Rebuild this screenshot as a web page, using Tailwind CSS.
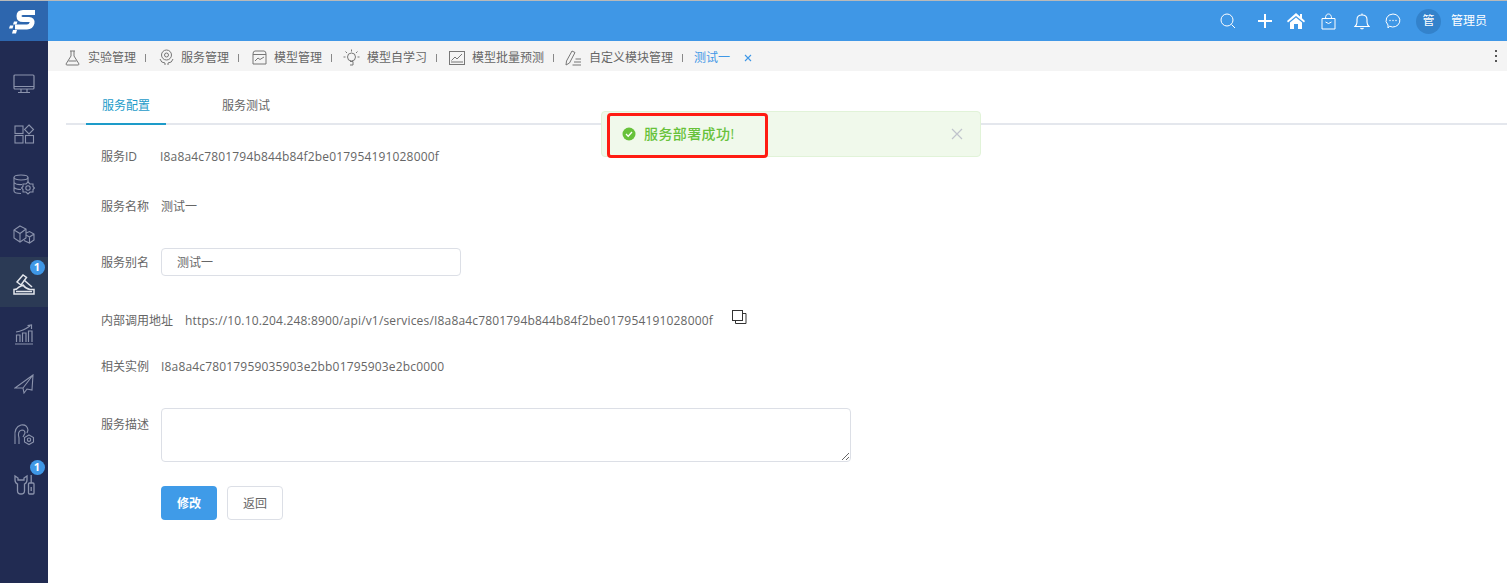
<!DOCTYPE html>
<html lang="zh-CN">
<head>
<meta charset="UTF-8" />
<title>服务配置</title>
<script src="https://cdn.jsdelivr.net/npm/@tailwindcss/browser@4"></script>
</head>
<body class="h-[583px] w-[1507px] overflow-hidden bg-white text-xs text-[#666] font-['Open_Sans','Noto_Sans_CJK_SC',sans-serif]">
<div class="h-px bg-[#b9b9b9]"></div>
<header class="flex h-10 items-center bg-[#3f97e6] text-white">
  <div class="h-10 w-12 bg-[#2d66ae]">
    <svg width="48" height="40" viewBox="0 0 48 40">
      <path d="M35 11.500 H23 Q19 11.500 19 15 Q19 18.500 23 18.500 H29 Q32.500 18.500 32 22 Q31 26 27 26 H15" fill="none" stroke="white" stroke-width="5"/>
      <path d="M14 20.500 h3.500 l-1 3 h-3.500z M10 24.500 h3.500 l-1 3 h-3.500z M13 29 h4 l-1 3.500 h-4z" fill="white"/>
    </svg>
  </div>
  <div class="ml-auto flex items-center">
    <svg class="mr-[21px]" width="16" height="16" viewBox="0 0 16 16" fill="none" stroke="white" stroke-width="1"><circle cx="7" cy="7" r="6"/><path d="M11.500 11.500 L15 15"/></svg>
    <svg class="mr-[13px]" width="16" height="16" viewBox="0 0 16 16" fill="none" stroke="white" stroke-width="2"><path d="M8 1 V15 M1 8 H15"/></svg>
    <svg class="mr-[15px]" width="20" height="18" viewBox="0 0 20 18" fill="white"><path d="M10 1 L1 9 L2 10.500 L10 4 L18 10.500 L19 9 L16 6.300 V2 H14 V4.600Z"/><path d="M4 10.500 L10 5.500 L16 10.500 V17 H12 V12 H8 V17 H4Z"/></svg>
    <svg class="mr-[18px]" width="15" height="17" viewBox="0 0 15 17" fill="none" stroke="white" stroke-width="1"><path d="M1 5.500 H14 V16 H1Z"/><path d="M4.500 5.500 Q4.500 1 7.500 1 Q10.500 1 10.500 5.500"/><path d="M4.500 9 Q7.500 12 10.500 9"/></svg>
    <svg class="mr-[15px]" width="16" height="17" viewBox="0 0 16 17" fill="none" stroke="white" stroke-width="1.100"><path d="M1 13.500 Q3 12 3 9 V6.500 Q3 2 8 2 Q13 2 13 6.500 V9 Q13 12 15 13.500Z"/><path d="M6.500 15 Q8 16.500 9.500 15"/><path d="M8 0.500 V2"/></svg>
    <svg class="mr-[15px]" width="16" height="16" viewBox="0 0 16 16" fill="none" stroke="white" stroke-width="1"><path d="M8 1 A7 6.500 0 1 1 4.500 13.200 L3 15 V12 A7 6.500 0 0 1 8 1Z"/><circle cx="5" cy="7.500" r=".7" fill="white" stroke="none"/><circle cx="8" cy="7.500" r=".7" fill="white" stroke="none"/><circle cx="11" cy="7.500" r=".7" fill="white" stroke="none"/></svg>
    <div class="mr-[10px] flex h-[25px] w-[25px] items-center justify-center rounded-full bg-[#3382cb] text-xs">管</div>
    <span class="mr-5 text-xs">管理员</span>
  </div>
</header>
<div class="flex">
  <aside class="relative h-[542px] w-12 shrink-0 bg-[#212b52] pt-4 text-[#8b93ac]">
    <div class="flex h-[50px] items-center justify-center pt-1">
      <svg width="22" height="20" viewBox="0 0 22 20" fill="none" stroke="currentColor" stroke-width="1.200"><rect x="1" y="1" width="20" height="14" rx="1"/><path d="M1 12.500 H21 M8 15 V18 M14 15 V18 M5 18.500 H17"/></svg>
    </div>
    <div class="flex h-[50px] items-center justify-center pt-1">
      <svg width="21" height="20" viewBox="0 0 21 20" fill="none" stroke="currentColor" stroke-width="1.100"><rect x="1" y="2" width="8" height="7.500"/><rect x="1" y="11.500" width="8" height="7.500"/><rect x="11.500" y="11.500" width="8" height="7.500"/><path d="M15 1 L19.500 5.500 L15 10 L10.500 5.500Z"/></svg>
    </div>
    <div class="flex h-[50px] items-center justify-center pt-1">
      <svg width="22" height="21" viewBox="0 0 22 21" fill="none" stroke="currentColor" stroke-width="1.100"><ellipse cx="8" cy="3.500" rx="7" ry="2.500"/><path d="M1 3.500 V17 Q1 19.500 8 19.500 M15 3.500 V8 M1 8.500 Q3 11 9 10.500 M1 13.500 Q3 15.500 8 15.500"/><circle cx="15" cy="14" r="2.200"/><path d="M15 8 L17 10 H20 V12.500 L21.500 14 L20 15.500 V18 H17 L15 20 L13 18 H10 V15.500 L8.500 14 L10 12.500 V10 H13Z"/></svg>
    </div>
    <div class="flex h-[50px] items-center justify-center pt-1">
      <svg width="22" height="19" viewBox="0 0 22 19" fill="none" stroke="currentColor" stroke-width="1.100"><path d="M7 1 L13 4 V13 L7 17 L1 13 V5Z"/><path d="M1 5 L7 8.500 L13 4 M7 8.500 V17"/><path d="M13 8 L16.500 6.500 L21 9 V15 L16.500 18 L11 15.500 M13 10 L16.500 12 L21 9 M16.500 12 V18"/></svg>
    </div>
    <div class="flex h-[50px] items-center justify-center bg-[#2b3a55] pt-1 text-[#e3e6ec]">
      <svg width="22" height="21" viewBox="0 0 22 21" fill="none" stroke="currentColor" stroke-width="1.500"><path d="M1 15.500 V20 H21 V15.500 H17 Q13 15 10 11 L6 13 Q4 15.500 1 15.500Z"/><path d="M4 8 L10 1 L13.500 3.500 L8 11Z"/><path d="M11 6 L19 13"/><path d="M3 17.500 H19"/></svg>
    </div>
    <div class="flex h-[50px] items-center justify-center pt-1">
      <svg width="20" height="21" viewBox="0 0 20 21" fill="none" stroke="currentColor" stroke-width="1.200"><path d="M1 20 H19 M2.500 18 V11 H6 V18 M8.500 18 V9 H12 V18 M14.500 18 V7 H18 V18 M2 8 Q9 7 16 2 M13.500 1.500 L17.500 1 L17.500 5"/></svg>
    </div>
    <div class="flex h-[50px] items-center justify-center pt-1">
      <svg width="20" height="20" viewBox="0 0 20 20" fill="none" stroke="currentColor" stroke-width="1.100"><path d="M19 1 L1 14 L9 14 L10 19 L13 15 L18 16Z M19 1 L9 14"/></svg>
    </div>
    <div class="flex h-[50px] items-center justify-center pt-1">
      <svg width="22" height="23" viewBox="0 0 22 23" fill="none" stroke="currentColor" stroke-width="1.100"><path d="M2 21 V14 Q1 4 8 2 Q14 1 15 7 L14 10 M6 21 V15 Q4 8 9 7 Q12 7 12 10 L10 14"/><path d="M16 12 L20.500 14.500 V19 L16 21.500 L11.500 19 V14.500Z"/><circle cx="16" cy="16.700" r="1.700"/></svg>
    </div>
    <div class="flex h-[50px] items-center justify-center pt-1">
      <svg width="21" height="22" viewBox="0 0 21 22" fill="none" stroke="currentColor" stroke-width="1.300"><path d="M1 3 V7 Q1 10 3.500 11 V18 Q3.500 21 7 21 Q10.500 21 10.500 18 V11 Q13 10 13 7 V3 L10 5 V7 H4 V5Z"/><rect x="14.500" y="10" width="5.500" height="11" rx="1"/><path d="M17.200 2 V10 M17.200 14 V18"/></svg>
    </div>
    <span class="absolute left-[29.500px] top-[219px] flex h-[15px] w-[15px] items-center justify-center rounded-full bg-[#3f97e6] text-[11px] font-bold text-white">1</span>
    <span class="absolute left-[29.500px] top-[419px] flex h-[15px] w-[15px] items-center justify-center rounded-full bg-[#3f97e6] text-[11px] font-bold text-white">1</span>
  </aside>
  <main class="relative flex-1">
    <nav class="flex h-[30px] items-center bg-[#f4f4f4] pl-[17px] pt-[3px]">
      <svg class="mr-[8px]" width="15" height="16" viewBox="0 0 15 16" fill="none" stroke="#777" stroke-width="1"><path d="M5 1 H10 M6 1 V6 L1 14 Q1 15 2 15 H13 Q14 15 14 14 L9 6 V1 M3.500 11 H11.500"/></svg>
      <span>实验管理</span><i class="mx-[9px] h-2 w-px bg-[#888]"></i>
      <svg class="ml-[4px] mr-[7px]" width="15" height="17" viewBox="0 0 15 17" fill="none" stroke="#777" stroke-width="1"><circle cx="7.500" cy="6" r="5"/><circle cx="7.500" cy="6" r="2"/><path d="M1 10 Q2 14 6 14 V16 M14 10 Q13 14 9 14 V16"/></svg>
      <span>服务管理</span><i class="mx-[9px] h-2 w-px bg-[#888]"></i>
      <svg class="ml-[4px] mr-[7px]" width="15" height="15" viewBox="0 0 15 15" fill="none" stroke="#777" stroke-width="1"><path d="M1 4 Q1 1 3 1 H12 Q14 1 14 4 V14 H1Z M1 4.500 H14 M3 11 L6 8 L8 9.500 L12 7"/></svg>
      <span>模型管理</span><i class="mx-[9px] h-2 w-px bg-[#888]"></i>
      <svg class="ml-[2px] mr-[7px]" width="17" height="17" viewBox="0 0 17 17" fill="none" stroke="#777" stroke-width="1"><circle cx="8.500" cy="8" r="4"/><path d="M7 12.500 H10 V16 H7 M8.500 .5 V2.500 M2.500 2.500 L4 4 M14.500 2.500 L13 4 M.5 8 H2.500 M14.500 8 H16.500"/></svg>
      <span>模型自学习</span><i class="mx-[9px] h-2 w-px bg-[#888]"></i>
      <svg class="ml-[3px] mr-[7px]" width="16" height="14" viewBox="0 0 16 14" fill="none" stroke="#777" stroke-width="1"><rect x=".5" y=".5" width="15" height="13"/><path d="M2.500 9.500 L6 6 L8 8 L13 3 M2 11 H14"/></svg>
      <span>模型批量预测</span><i class="mx-[9px] h-2 w-px bg-[#888]"></i>
      <svg class="ml-[2px] mr-[7px]" width="17" height="16" viewBox="0 0 17 16" fill="none" stroke="#777" stroke-width="1"><path d="M1 15 L1.500 11 L7 1 L10 2.500 L4.500 13Z M10.500 9 H16 M9 12 H16 M7.500 15 H16"/></svg>
      <span>自定义模块管理</span><i class="mx-[9px] h-2 w-px bg-[#888]"></i>
      <span class="ml-[2px] text-[#3f97e6]">测试一</span>
      <svg class="ml-[14px]" width="8" height="8" viewBox="0 0 8 8" stroke="#3f97e6" stroke-width="1.100"><path d="M1 1 L7 7 M7 1 L1 7"/></svg>
      <div class="ml-auto mr-[10px] -mt-[3px] flex flex-col gap-[3px]">
        <i class="h-[2px] w-[2px] bg-[#555]"></i><i class="h-[2px] w-[2px] bg-[#555]"></i><i class="h-[2px] w-[2px] bg-[#555]"></i>
      </div>
    </nav>
    <div class="pl-[18px] pt-[23px]">
      <div class="flex h-[31px] border-b-2 border-[#e4e7ed] pl-5">
        <div class="flex h-[31px] w-20 items-start justify-center border-b-2 border-[#1d9bc9] pt-[4px] text-[#1d9bc9]">服务配置</div>
        <div class="flex w-[104px] justify-end pt-[4px]">服务测试</div>
      </div>
      <div class="pl-[35px]">
        <div class="mt-[22px] flex h-5 items-center"><span class="w-[60px]">服务ID</span><span class="-ml-px tracking-[0.17px]">I8a8a4c7801794b844b84f2be017954191028000f</span></div>
        <div class="mt-[30px] flex h-5 items-center"><span class="w-[60px]">服务名称</span><span>测试一</span></div>
        <div class="mt-[31px] flex h-7 items-center"><span class="w-[60px] pt-px">服务别名</span>
          <div class="flex h-7 w-[300px] items-center rounded border border-[#dcdfe6] pl-[15px] pt-px">测试一</div>
        </div>
        <div class="mt-[35px] flex h-5 items-center"><span class="w-[84px]">内部调用地址</span><span class="tracking-[0.17px]">https://10.10.204.248:8900/api/v1/services/I8a8a4c7801794b844b84f2be017954191028000f</span>
          <svg class="ml-[19px] -mt-[9px]" width="15" height="14" viewBox="0 0 15 14" fill="none" stroke="#333" stroke-width="1"><rect x=".5" y=".5" width="10" height="10"/><path d="M10.500 3.500 H14 V13.500 H3.500 V10.500"/></svg>
        </div>
        <div class="mt-[26px] flex h-5 items-center"><span class="w-[60px]">相关实例</span><span class="tracking-[0.17px]">I8a8a4c78017959035903e2bb01795903e2bc0000</span></div>
        <div class="mt-[31px] flex items-start"><span class="w-[60px] pt-[9px]">服务描述</span>
          <textarea class="h-[54px] w-[690px] rounded border border-[#dcdfe6]"></textarea>
        </div>
        <div class="ml-[60px] mt-6 flex gap-[10px]">
          <button class="h-[34px] w-14 rounded bg-[#3f9be8] pt-[2px] font-bold text-white">修改</button>
          <button class="h-[34px] w-14 rounded border border-[#dcdfe6] bg-white pt-[2px]">返回</button>
        </div>
      </div>
    </div>
    <div class="absolute left-[553px] top-[70px] flex h-[46px] w-[380px] items-center rounded border border-[#e1f3d8] bg-[#f0f9eb] pl-5 text-[#67c23a]">
      <svg class="-mt-px" width="14" height="14" viewBox="0 0 14 14"><circle cx="7" cy="7" r="6.500" fill="#67c23a"/><path d="M4 7 L6.200 9.200 L10 5" fill="none" stroke="white" stroke-width="1.300"/></svg>
      <span class="ml-2 text-sm font-medium tracking-[0.4px]">服务部署成功!</span>
      <svg class="ml-auto mr-[17px]" width="12" height="12" viewBox="0 0 12 12" stroke="#c0c4cc" stroke-width="1.200"><path d="M1 1 L11 11 M11 1 L1 11"/></svg>
    </div>
    <div class="absolute left-[559px] top-[72px] h-[45px] w-[161px] rounded-sm border-[3px] border-[#ff1c12]"></div>
  </main>
</div>
</body>
</html>
